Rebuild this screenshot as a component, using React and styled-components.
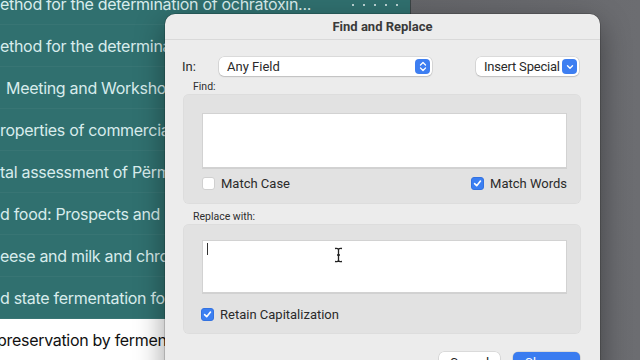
import styled, { createGlobalStyle } from 'styled-components';

const Global = createGlobalStyle`
  html, body { margin: 0; padding: 0; }
  body { font-family: Inter, 'Liberation Sans', sans-serif; }
`;

const Screen = styled.div`
  position: relative;
  width: 640px;
  height: 360px;
  overflow: hidden;
  display: flex;
  background: linear-gradient(90deg, #56585c 0%, #616266 50%, #6c6d71 100%);
`;

const ListWindow = styled.div`
  position: relative;
  width: 410px;
  height: 360px;
  overflow: hidden;
  background: #fff;
  border-right: 1px solid #3a4445;
`;

const List = styled.div`
  display: flex;
  flex-direction: column;
  margin-top: -17px;
`;

const Row = styled.div`
  height: 42px;
  display: flex;
  align-items: center;
  padding-left: ${(p) => p.indent || 0}px;
  margin-left: ${(p) => p.shift || 0}px;
  background: ${(p) => (p.plain ? '#ffffff' : '#30706f')};
  color: ${(p) => (p.plain ? '#111' : '#d8ecec')};
  border-bottom: 1px solid ${(p) => (p.plain ? 'transparent' : 'rgba(255,255,255,0.04)')};
  box-sizing: border-box;
  font-size: 16px;
  letter-spacing: -0.3px;
  white-space: nowrap;
`;

const Dots = styled.div`
  position: absolute;
  top: 4px;
  left: 352px;
  display: flex;
  gap: 9px;
`;

const Dot = styled.span`
  width: 2px;
  height: 2px;
  border-radius: 1px;
  background: #e8f4f4;
`;

const Dialog = styled.div`
  position: absolute;
  left: 165px;
  top: 14px;
  width: 435px;
  height: 380px;
  background: #ececec;
  border-radius: 10px;
  box-shadow: 0 0 0 0.5px rgba(0, 0, 0, 0.3), 0 10px 30px rgba(0, 0, 0, 0.4);
  display: flex;
  flex-direction: column;
  color: #2a2a2a;
  font-family: Roboto, 'Liberation Sans', sans-serif;
`;

const TitleBar = styled.div`
  height: 25px;
  flex-shrink: 0;
  display: flex;
  align-items: center;
  justify-content: center;
  font-size: 13px;
  font-weight: 700;
  color: #3a3a3a;
  border-bottom: 1px solid #d9d9d9;
`;

const TopRow = styled.div`
  display: flex;
  align-items: center;
  height: 19px;
  margin-top: 17px;
  padding: 0 21px 0 17px;
  font-size: 13px;
  white-space: nowrap;
`;

const InLabel = styled.span`
  width: 37px;
`;

const Popup = styled.div`
  height: 19px;
  width: ${(p) => p.w}px;
  margin-left: ${(p) => (p.push ? 'auto' : '0')};
  background: #fff;
  border-radius: 5px;
  box-shadow: 0 0 0 0.5px rgba(0, 0, 0, 0.15), 0 1px 1.5px rgba(0, 0, 0, 0.12);
  display: flex;
  align-items: center;
  justify-content: space-between;
  padding: 0 2px 0 8px;
  box-sizing: border-box;
  letter-spacing: ${(p) => (p.tight ? '-0.2px' : '0')};
`;

const PopupArrow = styled.div`
  width: 15px;
  height: 15px;
  border-radius: 4px;
  background: #3d7ef1;
  display: flex;
  align-items: center;
  justify-content: center;
`;

const Label = styled.div`
  font-size: 10.5px;
  line-height: 12px;
  height: 12px;
  margin: ${(p) => p.top}px 0 ${(p) => p.bottom}px 28px;
  color: #2e2e2e;
`;

const Group = styled.div`
  margin: 0 19px 0 18px;
  background: #e2e2e2;
  border-radius: 6px;
  box-shadow: inset 0 0 0 0.5px rgba(0, 0, 0, 0.04);
  padding: ${(p) => p.pt}px 14px ${(p) => p.pb}px 19px;
  display: flex;
  flex-direction: column;
`;

const Field = styled.div`
  position: relative;
  height: ${(p) => p.h}px;
  box-sizing: border-box;
  background: #fff;
  border: 0.5px solid #d2d2d2;
  box-shadow: 0 0.5px 0 rgba(0, 0, 0, 0.15);
`;

const Caret = styled.div`
  position: absolute;
  left: 4px;
  top: 2px;
  width: 1px;
  height: 12px;
  background: #333;
`;

const IBeam = styled.svg`
  position: absolute;
  left: 131px;
  top: 6px;
`;

const CheckRow = styled.div`
  display: flex;
  align-items: center;
  justify-content: space-between;
  margin-top: ${(p) => p.top}px;
  height: 13px;
  margin-left: ${(p) => p.shift || 0}px;
`;

const Check = styled.label`
  display: flex;
  align-items: center;
  gap: 6px;
  font-size: 13px;
  line-height: 13px;
  color: #2a2a2a;
  white-space: nowrap;
`;

const Box = styled.span`
  width: 13px;
  height: 13px;
  border-radius: 3px;
  box-sizing: border-box;
  display: flex;
  align-items: center;
  justify-content: center;
  background: ${(p) => (p.on ? '#3b7ff2' : '#ffffff')};
  border: 0.5px solid ${(p) => (p.on ? '#3372e0' : '#d0d0d0')};
`;

const Buttons = styled.div`
  display: flex;
  justify-content: flex-end;
  gap: 13px;
  margin-top: 18px;
  padding-right: 20px;
`;

const Button = styled.div`
  height: 21px;
  width: ${(p) => p.w}px;
  border-radius: 5px;
  font-size: 13px;
  display: flex;
  align-items: center;
  justify-content: center;
  background: ${(p) => (p.primary ? '#3a7cf0' : '#fff')};
  color: ${(p) => (p.primary ? '#fff' : '#222')};
  box-shadow: 0 0 0 0.5px rgba(0, 0, 0, 0.15), 0 1px 1px rgba(0, 0, 0, 0.12);
`;

const Tick = () => (
  <svg width='9' height='9' viewBox='0 0 10 10'>
    <path d='M1.8 5.2 L4.1 7.5 L8.3 2.3' fill='none' stroke='#fff' strokeWidth='1.8' strokeLinecap='round' strokeLinejoin='round' />
  </svg>
);

const rows = [
  { t: 'ethod for the determination of ochratoxin...' },
  { t: 'ethod for the determination of ochratoxin A in' },
  { t: 'Meeting and Workshop on Food Safety', indent: 6 },
  { t: 'roperties of commercial starter cultures' },
  { t: 'tal assessment of Përmet cheese' },
  { t: 'd food: Prospects and risks' },
  { t: 'eese and milk and chronic disease' },
  { t: 'd state fermentation for food' },
  { t: 'preservation by fermentation', plain: true, shift: -3 },
];

export default function App() {
  return (
    <>
      <Global />
      <Screen>
        <ListWindow>
          <List>
            {rows.map((r, i) => (
              <Row key={i} indent={r.indent} plain={r.plain} shift={r.shift}>
                {r.t}
              </Row>
            ))}
          </List>
          <Dots>
            {[0, 1, 2, 3, 4].map((d) => (
              <Dot key={d} />
            ))}
          </Dots>
        </ListWindow>

        <Dialog>
          <TitleBar>Find and Replace</TitleBar>
          <TopRow>
            <InLabel>In:</InLabel>
            <Popup w={213}>
              <span>Any Field</span>
              <PopupArrow>
                <svg width='8' height='11' viewBox='0 0 8 11'>
                  <path d='M1.5 4 L4 1.5 L6.5 4 M1.5 7 L4 9.5 L6.5 7' fill='none' stroke='#fff' strokeWidth='1.3' strokeLinecap='round' strokeLinejoin='round' />
                </svg>
              </PopupArrow>
            </Popup>
            <Popup w={103} push tight>
              <span>Insert Special</span>
              <PopupArrow>
                <svg width='8' height='6' viewBox='0 0 8 6'>
                  <path d='M1.5 1.8 L4 4.3 L6.5 1.8' fill='none' stroke='#fff' strokeWidth='1.4' strokeLinecap='round' strokeLinejoin='round' />
                </svg>
              </PopupArrow>
            </Popup>
          </TopRow>

          <Label top={5} bottom={1}>Find:</Label>
          <Group pt={19} pb={14}>
            <Field h={55} />
            <CheckRow top={9}>
              <Check>
                <Box />
                Match Case
              </Check>
              <Check>
                <Box on>
                  <Tick />
                </Box>
                Match Words
              </Check>
            </CheckRow>
          </Group>

          <Label top={7} bottom={1}>Replace with:</Label>
          <Group pt={16} pb={13}>
            <Field h={53}>
              <Caret />
              <IBeam width='9' height='16' viewBox='0 0 9 16'>
                <path d='M1 1.5 Q4.5 1 4.5 3 L4.5 13 Q4.5 15 1 14.5 M8 1.5 Q4.5 1 4.5 3 M4.5 13 Q4.5 15 8 14.5 M3 8 L6 8' fill='none' stroke='#222' strokeWidth='1.3' />
              </IBeam>
            </Field>
            <CheckRow top={15} shift={-1}>
              <Check>
                <Box on>
                  <Tick />
                </Box>
                Retain Capitalization
              </Check>
            </CheckRow>
          </Group>

          <Buttons>
            <Button w={61}>Cancel</Button>
            <Button w={67} primary>
              Choose
            </Button>
          </Buttons>
        </Dialog>
      </Screen>
    </>
  );
}
